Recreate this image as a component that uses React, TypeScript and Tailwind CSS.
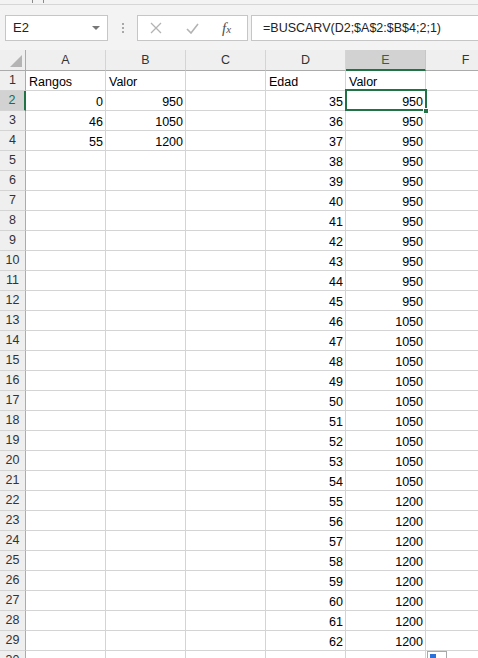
import { Fragment } from 'react'

type Row = { a?: string; b?: string; d?: string; e?: string }

const rows: Row[] = [
  { a: 'Rangos', b: 'Valor', d: 'Edad', e: 'Valor' },
  { a: '0', b: '950', d: '35', e: '950' },
  { a: '46', b: '1050', d: '36', e: '950' },
  { a: '55', b: '1200', d: '37', e: '950' },
]
for (let age = 38; age <= 62; age++) {
  rows.push({ d: String(age), e: age < 46 ? '950' : age < 55 ? '1050' : '1200' })
}
rows.push({})

const cols = ['A', 'B', 'C', 'D', 'E', 'F']

function Cell({ value, text }: { value?: string; text?: boolean }) {
  return (
    <div
      className={`flex h-[20px] items-end border-b border-r border-[#d4d4d4] pb-[2px] leading-none text-black ${
        text ? 'justify-start pl-[3px]' : 'justify-end pr-[2px]'
      }`}
    >
      {value}
    </div>
  )
}

export default function App() {
  return (
    <div className="relative h-[658px] w-[478px] overflow-hidden bg-white font-['Liberation_Sans',Arial,sans-serif] text-[12.5px]">
      {/* ribbon edge */}
      <div className="relative h-[5px] border-b border-[#d6d6d6] bg-[#f3f3f3]">
        <span className="absolute left-[32px] top-0 h-[3px] w-px bg-[#8a8a8a]" />
        <span className="absolute left-[43px] top-0 h-[3px] w-px bg-[#8a8a8a]" />
      </div>

      {/* formula bar */}
      <div className="flex h-[45px] items-start bg-[#f3f3f3] pt-[10px]">
        <div className="ml-[5px] flex h-[26px] w-[103px] items-center justify-between border border-[#c6c6c6] bg-white pl-[7px] pr-[7px] text-[13px] text-[#222]">
          <span>E2</span>
          <span className="h-0 w-0 border-x-[4px] border-t-[4px] border-x-transparent border-t-[#777]" />
        </div>
        <div className="flex h-[26px] w-[29px] flex-col items-center justify-center gap-[2px]">
          <span className="h-[2px] w-[2px] bg-[#a8a8a8]" />
          <span className="h-[2px] w-[2px] bg-[#a8a8a8]" />
          <span className="h-[2px] w-[2px] bg-[#a8a8a8]" />
        </div>
        <div className="flex h-[26px] w-[111px] items-center border border-[#c6c6c6] bg-white">
          <svg className="ml-[12px]" width="12" height="12" viewBox="0 0 12 12">
            <path d="M1 1 L11 11 M11 1 L1 11" stroke="#b3b3b3" strokeWidth="1.3" />
          </svg>
          <svg className="ml-[24px]" width="13" height="11" viewBox="0 0 13 11">
            <path d="M1 6 L5 10 L12 1" stroke="#b3b3b3" strokeWidth="1.6" fill="none" />
          </svg>
          <span className="ml-[23px] font-['Liberation_Serif',serif] text-[15px] italic leading-none text-[#505050]">
            f<span className="text-[11px]">x</span>
          </span>
        </div>
        <div className="ml-[3px] flex h-[26px] flex-1 items-center border-y border-l border-[#c6c6c6] bg-white pl-[11px] text-[#222]">
          =BUSCARV(D2;$A$2:$B$4;2;1)
        </div>
      </div>

      {/* grid */}
      <div className="grid grid-cols-[26px_80px_80px_80px_80px_80px_80px]">
        <div className="relative h-[21px] border-b border-r border-[#ababab] bg-[#efefef]">
          <span className="absolute bottom-[3px] right-[3px] h-0 w-0 border-b-[12px] border-l-[12px] border-b-[#b4b4b4] border-l-transparent" />
        </div>
        {cols.map((c) =>
          c === 'E' ? (
            <div
              key={c}
              className="flex h-[21px] items-center justify-center border-b-2 border-r border-b-[#217346] border-r-[#c6c6c6] bg-[#d2d2d2] pt-[2px] text-[#1e6b40]"
            >
              {c}
            </div>
          ) : (
            <div
              key={c}
              className="flex h-[21px] items-center justify-center border-b border-r border-b-[#ababab] border-r-[#d4d4d4] bg-[#efefef] pt-[1px] text-[#333]"
            >
              {c}
            </div>
          )
        )}

        {rows.map((r, i) => {
          const n = i + 1
          const selected = n === 2
          return (
            <Fragment key={n}>
              <div
                className={`flex h-[20px] items-center justify-center border-b border-[#d4d4d4] ${
                  selected
                    ? 'border-r-2 border-r-[#217346] bg-[#d2d2d2] text-[#1e6b40]'
                    : 'border-r border-r-[#ababab] bg-[#efefef] text-[#333]'
                }`}
              >
                {n}
              </div>
              <Cell value={r.a} text={n === 1} />
              <Cell value={r.b} text={n === 1} />
              <Cell />
              <Cell value={r.d} text={n === 1} />
              {selected ? (
                <div className="relative">
                  <Cell value={r.e} />
                  <div className="pointer-events-none absolute -left-px -right-px -top-[2px] bottom-0 border-2 border-[#217346]" />
                  <div className="absolute -bottom-[3px] -right-[3px] h-[6px] w-[6px] border border-white bg-[#217346]" />
                </div>
              ) : (
                <Cell value={r.e} text={n === 1} />
              )}
              <Cell />
            </Fragment>
          )
        })}
      </div>

      {/* quick analysis button */}
      <div className="absolute left-[427px] top-[651px] h-[14px] w-[20px] border border-[#a8a8a8] bg-white p-[2px]">
        <div className="h-[5px] w-[6px] bg-[#2b71d9]" />
      </div>
    </div>
  )
}
